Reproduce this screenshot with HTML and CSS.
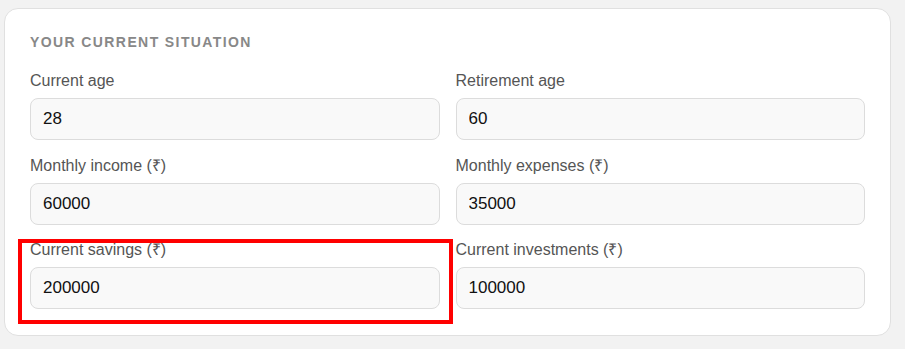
FILE: index.html
```html
<!DOCTYPE html>
<html>
<head>
  <link rel="stylesheet" href="styles.css">
</head>
<body>
  <div class="card">
    <h3 class="card-title">Your current situation</h3>

    <div class="form-grid">
      <div class="field">
        <label for="age">Current age</label>
        <input id="age" type="text" value="28">
      </div>
      <div class="field">
        <label for="retire">Retirement age</label>
        <input id="retire" type="text" value="60">
      </div>
      <div class="field">
        <label for="income">Monthly income (₹)</label>
        <input id="income" type="text" value="60000">
      </div>
      <div class="field">
        <label for="expenses">Monthly expenses (₹)</label>
        <input id="expenses" type="text" value="35000">
      </div>
      <div class="field highlighted">
        <label for="savings">Current savings (₹)</label>
        <input id="savings" type="text" value="200000">
      </div>
      <div class="field">
        <label for="investments">Current investments (₹)</label>
        <input id="investments" type="text" value="100000">
      </div>
    </div>
  </div>
</body>
</html>
```

FILE: styles.css
```css
/* Page */
body {
  margin: 0;
  padding: 8px 14px 14px 4px;
  background: #f2f2f2;
  font-family: "Liberation Sans", Arial, sans-serif;
}

.card {
  background: #fff;
  border: 1px solid #e0e0e0;
  border-radius: 14px;
  padding: 25px 25px 26px;
}

.card-title {
  margin: 0 0 22px;
  font-size: 14px;
  line-height: 16px;
  font-weight: bold;
  text-transform: uppercase;
  letter-spacing: 0.1em;
  color: #888;
}

/* Grid of fields, two per row */
.form-grid {
  display: grid;
  grid-template-columns: 1fr 1fr;
  column-gap: 16px;
  row-gap: 16.5px;
}

.field {
  display: flex;
  flex-direction: column;
}

.field label {
  font-size: 16px;
  line-height: 18px;
  height: 18px;
  color: #555;
  margin-bottom: 8px;
}

.field input {
  box-sizing: border-box;
  height: 42px;
  padding: 0 12px;
  border: 1px solid #dcdcdc;
  border-radius: 8px;
  background: #f9f9f9;
  font-family: inherit;
  font-size: 17px;
  color: #111;
  outline: none;
}

/* Red annotation box drawn over the savings field */
.highlighted {
  position: relative;
}

.highlighted::after {
  content: "";
  position: absolute;
  left: -12px;
  top: -2px;
  right: -13px;
  bottom: -15px;
  border: 4px solid #f00;
  pointer-events: none;
}
```
